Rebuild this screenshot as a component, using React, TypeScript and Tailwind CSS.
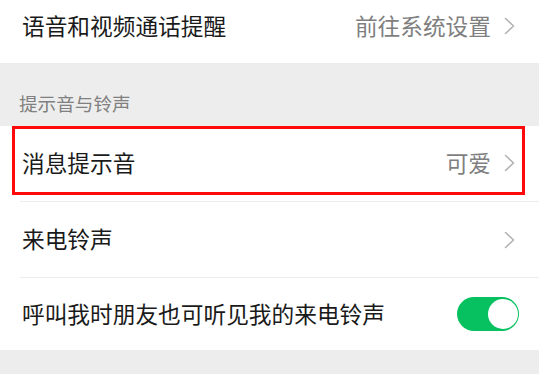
import React from "react";

/* ── Chevron ──────────────────────────────────── */
function Chevron() {
  return (
    <svg width="11" height="18" viewBox="0 0 11 18" className="shrink-0">
      <polyline points="1.5,1.5 9.5,9 1.5,16.5" fill="none" stroke="#b3b3b3" strokeWidth="1.6" strokeLinecap="round" strokeLinejoin="round" />
    </svg>
  );
}

/* ── Toggle ───────────────────────────────────── */
function Toggle() {
  return (
    <div className="flex h-[34px] w-[62px] shrink-0 items-center justify-end rounded-full bg-[#07c160] pr-[1px]">
      <div className="h-[30px] w-[30px] rounded-full bg-white" />
    </div>
  );
}

const font = { fontFamily: '"Noto Sans CJK SC", "Noto Sans", sans-serif' };

export default function App() {
  return (
    <div className="h-[374px] w-[541px] overflow-hidden bg-white" style={font}>
      <div className="w-[539px]">
        {/* Row: voice & video call reminder (cropped top) */}
        <div className="flex h-[63px] items-center justify-between pb-[10px] pl-[22px] pr-[24px]">
          <span className="text-[22.7px] leading-none text-[#1a1a1a]">语音和视频通话提醒</span>
          <div className="flex items-center gap-[13px]">
            <span className="text-[22.7px] leading-none text-[#7f7f7f]">前往系统设置</span>
            <Chevron />
          </div>
        </div>

        {/* Section header */}
        <div className="flex h-[63px] items-end bg-[#ededed] pb-[13px] pl-[19px]">
          <span className="text-[18.6px] leading-none text-[#808080]">提示音与铃声</span>
        </div>

        {/* Message tone */}
        <div className="relative flex h-[75px] items-center justify-between pl-[22px] pr-[24px]">
          <span className="text-[22.7px] leading-none text-[#1a1a1a]">消息提示音</span>
          <div className="flex items-center gap-[13px]">
            <span className="text-[22.7px] leading-none text-[#7f7f7f]">可爱</span>
            <Chevron />
          </div>
          <div className="pointer-events-none absolute left-[12px] top-0 h-[69px] w-[513px] border-[3px] border-[#ff0a0a]" />
        </div>

        <div className="ml-[20px] h-px bg-[#ececec]" />

        {/* Incoming ringtone */}
        <div className="flex h-[75px] items-center justify-between pl-[22px] pr-[24px]">
          <span className="text-[22.7px] leading-none text-[#1a1a1a]">来电铃声</span>
          <Chevron />
        </div>

        <div className="ml-[20px] h-px bg-[#ececec]" />

        {/* Let friends hear my ringtone */}
        <div className="flex h-[72px] items-center justify-between pl-[22px] pr-[20px]">
          <span className="text-[22.7px] leading-none text-[#1a1a1a]">呼叫我时朋友也可听见我的来电铃声</span>
          <Toggle />
        </div>

        <div className="h-[24px] bg-[#ededed]" />
      </div>
    </div>
  );
}
